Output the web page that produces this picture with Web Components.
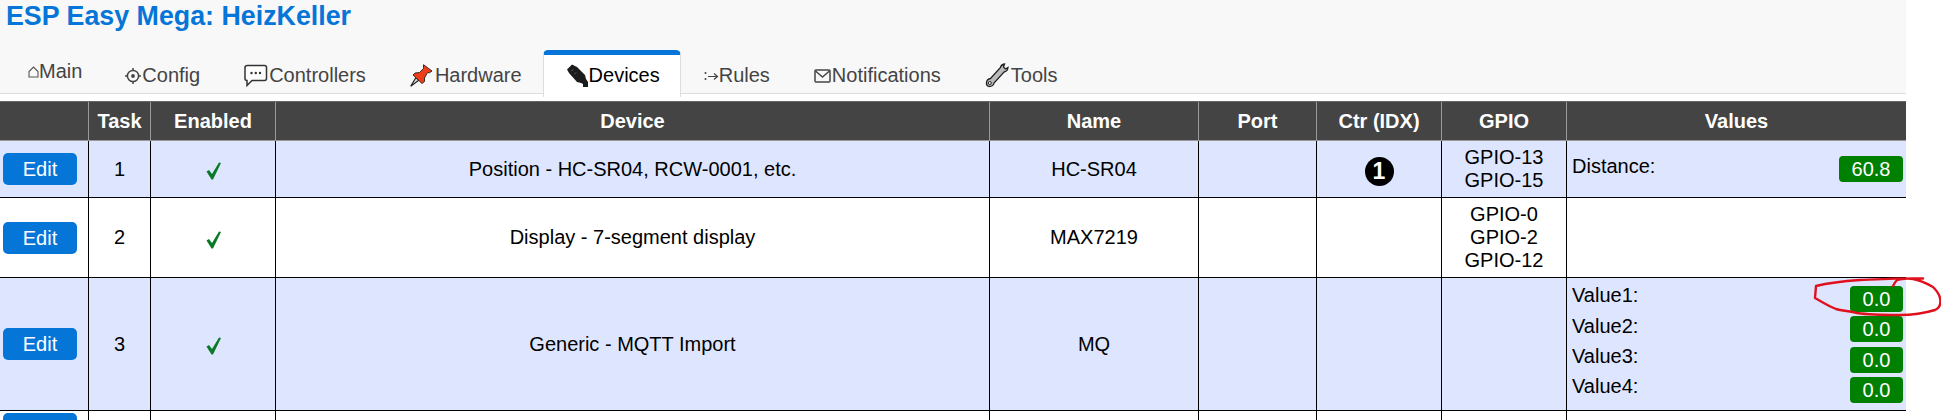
<!DOCTYPE html>
<html>
<head>
<meta charset="utf-8">
<title>ESP Easy Mega: HeizKeller</title>
<style>
  html, body { margin: 0; height: 420px; overflow: hidden; background: #fff; }
  body { font-family: "Liberation Sans", Arial, sans-serif; font-size: 20px; color: #000; }
</style>
</head>
<body>
<esp-page>
  <esp-header slot="header" title="ESP Easy Mega: HeizKeller">
    <esp-tab shift="-4" icon="main">Main</esp-tab>
    <esp-tab icon="config" style="margin-left:-1px">Config</esp-tab>
    <esp-tab icon="controllers">Controllers</esp-tab>
    <esp-tab icon="hardware">Hardware</esp-tab>
    <esp-tab icon="devices" active>Devices</esp-tab>
    <esp-tab icon="rules">Rules</esp-tab>
    <esp-tab icon="notifications">Notifications</esp-tab>
    <esp-tab icon="tools">Tools</esp-tab>
  </esp-header>
  <device-table>
    <device-row task="1" check device="Position - HC-SR04, RCW-0001, etc." name="HC-SR04" ctr="1" style="--row-h:57px;--bg:#dee6ff">
      <span slot="gpio">GPIO-13<br>GPIO-15</span>
      <task-value label="Distance:" value="60.8" wide></task-value>
    </device-row>
    <device-row task="2" check device="Display - 7-segment display" name="MAX7219" style="--row-h:80px;--bg:#fff">
      <span slot="gpio">GPIO-0<br>GPIO-2<br>GPIO-12</span>
    </device-row>
    <device-row task="3" check device="Generic - MQTT Import" name="MQ" style="--row-h:133px;--bg:#dee6ff">
      <task-value label="Value1:" value="0.0"></task-value>
      <task-value label="Value2:" value="0.0"></task-value>
      <task-value label="Value3:" value="0.0"></task-value>
      <task-value label="Value4:" value="0.0"></task-value>
    </device-row>
    <device-row blank style="--row-h:36px;--bg:#fff"></device-row>
  </device-table>
  <red-scribble></red-scribble>
</esp-page>

<script>
const COLS = '89px 62px 125px 714px 209px 118px 125px 125px 339px';

const ICONS = {
  main: '<svg width="11" height="12" viewBox="0 0 11 12"><path d="M1 11V5.500L5.500 1 10 5.500V11Z" fill="none" stroke="#555" stroke-width="1.100"/></svg>',
  config: '<svg width="17" height="18" viewBox="0 0 17 18"><circle cx="8" cy="9" r="5.600" fill="none" stroke="#444" stroke-width="1.500"/><circle cx="8" cy="9" r="1.900" fill="#444"/><path d="M8 1v2.500M8 14.500V17M0 9h2.500M13.500 9h2.500" stroke="#444" stroke-width="1.500"/></svg>',
  controllers: '<svg width="25" height="24" viewBox="0 0 25 24"><path d="M3.500 1.500H20.500Q22.500 1.500 22.500 3.500V14.500Q22.500 16.500 20.500 16.500H8L3 21.500V16.500Q1 16.500 1 14.500V3.500Q1 1.500 3.500 1.500Z" fill="#fff" stroke="#333" stroke-width="1.500"/><circle cx="7.500" cy="9" r="1.200" fill="#333"/><circle cx="11.800" cy="9" r="1.200" fill="#333"/><circle cx="16" cy="9" r="1.200" fill="#333"/></svg>',
  hardware: '<svg width="25" height="24" viewBox="0 0 25 24"><path d="M.700 22.300L6 13.500l2.800 2.800Z" fill="#ddd" stroke="#222" stroke-width="1.200"/><path d="M13.500.700L22 7 19.500 8.800 17.500 8.500 14.500 14 14.500 17.500 12 19.500 3 11 5 9 9.500 8.500 13.500 4.500Z" fill="#ee3d17" stroke="#222" stroke-width=".9"/></svg>',
  devices: '<svg width="23" height="24" viewBox="0 0 23 24"><path d="M1 5.500L6 .500l5 2.500 8 8 1 4 2 3V23H17V20L15 19 11 18 3 9Z" fill="#1c1c1c"/><path d="M7 5.500L5.500 7M10 8.500l-1.500 1.500" stroke="#666" stroke-width="1"/></svg>',
  rules: '<svg width="15" height="12" viewBox="0 0 15 12"><circle cx="1.500" cy="3" r="1" fill="#444"/><circle cx="1.500" cy="9" r="1" fill="#444"/><path d="M4 6.500h9M10 3.500l3.500 3-3.500 3" fill="none" stroke="#444" stroke-width="1.200"/></svg>',
  notifications: '<svg width="18" height="14" viewBox="0 0 18 14"><rect x="1" y="1" width="15" height="12" rx="1" fill="none" stroke="#444" stroke-width="1.500"/><path d="M1.500 2l7 6 7-6" fill="none" stroke="#444" stroke-width="1.500"/></svg>',
  tools: '<svg width="26" height="25" viewBox="0 0 26 25"><path d="M5.500 15.500L15.500 4.500Q16 1.500 19.500 1L18.500 4 20.500 6 23 4.500Q22.500 8.500 19 9L9 20Q8.500 23.500 4 23.500 1 22.500 1.500 19.500 2 16 5.500 15.500Z" fill="#bbb" stroke="#222" stroke-width="1.300"/><circle cx="4.800" cy="20" r="1.500" fill="#fff" stroke="#222"/></svg>'
};

class EspPage extends HTMLElement {
  constructor() {
    super();
    this.attachShadow({ mode: 'open' });
    this.shadowRoot.innerHTML = `
      <style>
        :host { display: block; position: relative; width: 1941px; height: 420px; overflow: hidden; }
      </style>
      <slot name="header"></slot>
      <slot></slot>
    `;
  }
}

class EspHeader extends HTMLElement {
  constructor() {
    super();
    this.attachShadow({ mode: 'open' });
    this.shadowRoot.innerHTML = `
      <style>
        :host { display: block; width: 1906px; height: 101px; background: linear-gradient(#f8f8f8 94px, #fff 94px); }
        h1 { margin: 0; height: 50px; padding-left: 6px; box-sizing: border-box; color: #0575d8; font-size: 26.800px; line-height: 32px; font-weight: bold; }
        nav { display: flex; align-items: flex-start; height: 43px; padding-left: 6px; border-bottom: 1px solid #ddd; }
      </style>
      <h1>${this.getAttribute('title')}</h1>
      <nav><slot></slot></nav>
    `;
  }
}

class EspTab extends HTMLElement {
  constructor() {
    super();
    this.attachShadow({ mode: 'open' });
    this.shadowRoot.innerHTML = `
      <style>
        :host { display: block; padding: 0 22px; height: 43px; box-sizing: border-box; color: #444; font-size: 20px; }
        :host([active]) { height: 47px; margin: 0 1px 0 -1px; padding: 0 20px 0 22px; background: #fff; color: #000; border: 1px solid #ddd; border-top: 5px solid #0575d8; border-bottom: 0; border-radius: 5px 5px 0 0; }
        .in { display: flex; align-items: center; height: 43px; padding-top: 8px; box-sizing: border-box; }
        :host([active]) .in { height: 41px; padding-top: 0; }
        svg { display: block; flex: none; }
      </style>
      <div class="in">${ICONS[this.getAttribute('icon')]}<slot></slot></div>
    `;
    const shift = this.getAttribute('shift');
    if (shift) this.shadowRoot.querySelector('.in').style.transform = `translateY(${shift}px)`;
  }
}

class DeviceTable extends HTMLElement {
  constructor() {
    super();
    this.attachShadow({ mode: 'open' });
    const heads = ['', 'Task', 'Enabled', 'Device', 'Name', 'Port', 'Ctr (IDX)', 'GPIO', 'Values'];
    this.shadowRoot.innerHTML = `
      <style>
        :host { display: block; width: 1906px; }
        .head { display: grid; grid-template-columns: ${COLS}; height: 40px; background: #444; color: #fff; font-weight: bold; font-size: 20px; border-top: 1px solid #666; box-sizing: border-box; border-bottom: 1px solid #999; }
        .head div { display: flex; align-items: center; justify-content: center; border-right: 1px solid #999; box-sizing: border-box; }
        .head div:last-child { border-right: 0; }
      </style>
      <div class="head">${heads.map(h => `<div>${h}</div>`).join('')}</div>
      <slot></slot>
    `;
  }
}

class DeviceRow extends HTMLElement {
  constructor() {
    super();
    this.attachShadow({ mode: 'open' });
    const a = n => this.getAttribute(n) || '';
    const check = this.hasAttribute('check') ? `<svg width="16" height="18" viewBox="0 0 16 18"><path d="M.5 9.500L3 8 6 12 13 .5 15 1 7 17.500H5.500Z" fill="#0a7a28"/></svg>` : '';
    const ctr = a('ctr') ? `<span class="ctr">${a('ctr')}</span>` : '';
    this.shadowRoot.innerHTML = `
      <style>
        :host { display: grid; grid-template-columns: ${COLS}; height: var(--row-h); background: var(--bg); border-bottom: 1px solid #000; box-sizing: border-box; font-size: 20px; }
        .c { display: flex; align-items: center; justify-content: center; text-align: center; border-right: 1px solid #000; box-sizing: border-box; line-height: 23px; }
        .c.first { justify-content: flex-start; padding-left: 3px; }
        .c.values { flex-direction: column; align-items: stretch; border-right: 0; padding: 0 3px 0 5px; text-align: left; }
        .edit { display: block; width: 74px; height: 32px; line-height: 32px; text-align: center; background: #0575d8; color: #fff; border-radius: 5px; }
        .ctr { display: block; width: 29px; height: 29px; margin-top: 5px; line-height: 29px; border-radius: 50%; background: #000; color: #fff; font-weight: bold; font-size: 23px; }
        .check { padding: 4px 0 0 2px; }
      </style>
      <div class="c first"><span class="edit">${this.hasAttribute('blank') ? '' : 'Edit'}</span></div>
      <div class="c">${a('task')}</div>
      <div class="c check">${check}</div>
      <div class="c">${a('device')}</div>
      <div class="c">${a('name')}</div>
      <div class="c"></div>
      <div class="c">${ctr}</div>
      <div class="c"><slot name="gpio"></slot></div>
      <div class="c values"><slot></slot></div>
    `;
  }
}

class TaskValue extends HTMLElement {
  constructor() {
    super();
    this.attachShadow({ mode: 'open' });
    this.shadowRoot.innerHTML = `
      <style>
        :host { display: flex; justify-content: space-between; height: 30.300px; font-size: 20px; }
        .l { padding-top: 1px; line-height: 23px; }
        .v { display: block; margin-top: 2.600px; width: 53px; height: 26px; line-height: 26px; text-align: center; background: #008000; color: #fff; border-radius: 4px; }
        :host([wide]) .v { width: 64px; }
      </style>
      <span class="l">${this.getAttribute('label')}</span>
      <span class="v">${this.getAttribute('value')}</span>
    `;
  }
}

class RedScribble extends HTMLElement {
  constructor() {
    super();
    this.attachShadow({ mode: 'open' });
    this.shadowRoot.innerHTML = `
      <style>
        :host { position: absolute; left: 1800px; top: 265px; width: 141px; height: 60px; pointer-events: none; }
        svg { display: block; }
      </style>
      <svg width="141" height="60" viewBox="0 0 141 60"><path d="M123 13.500C105 13 85 14 60 15 45 16 28 18 16 21L15 33C22 37 28 41 36 44 42 46 50 46 57 48 70 50 85 50 100 50 112 50 125 48 135 45 140 43 141 38 140 33 139 28 136 25 133 22 126 18 120 15 113 14 108 13 100 14 97 15 95 17 94 19 93 21" fill="none" stroke="#e0101c" stroke-width="2.400" stroke-linecap="round" stroke-linejoin="round"/></svg>
    `;
  }
}

customElements.define('esp-page', EspPage);
customElements.define('esp-header', EspHeader);
customElements.define('esp-tab', EspTab);
customElements.define('device-table', DeviceTable);
customElements.define('device-row', DeviceRow);
customElements.define('task-value', TaskValue);
customElements.define('red-scribble', RedScribble);
</script>
</body>
</html>
